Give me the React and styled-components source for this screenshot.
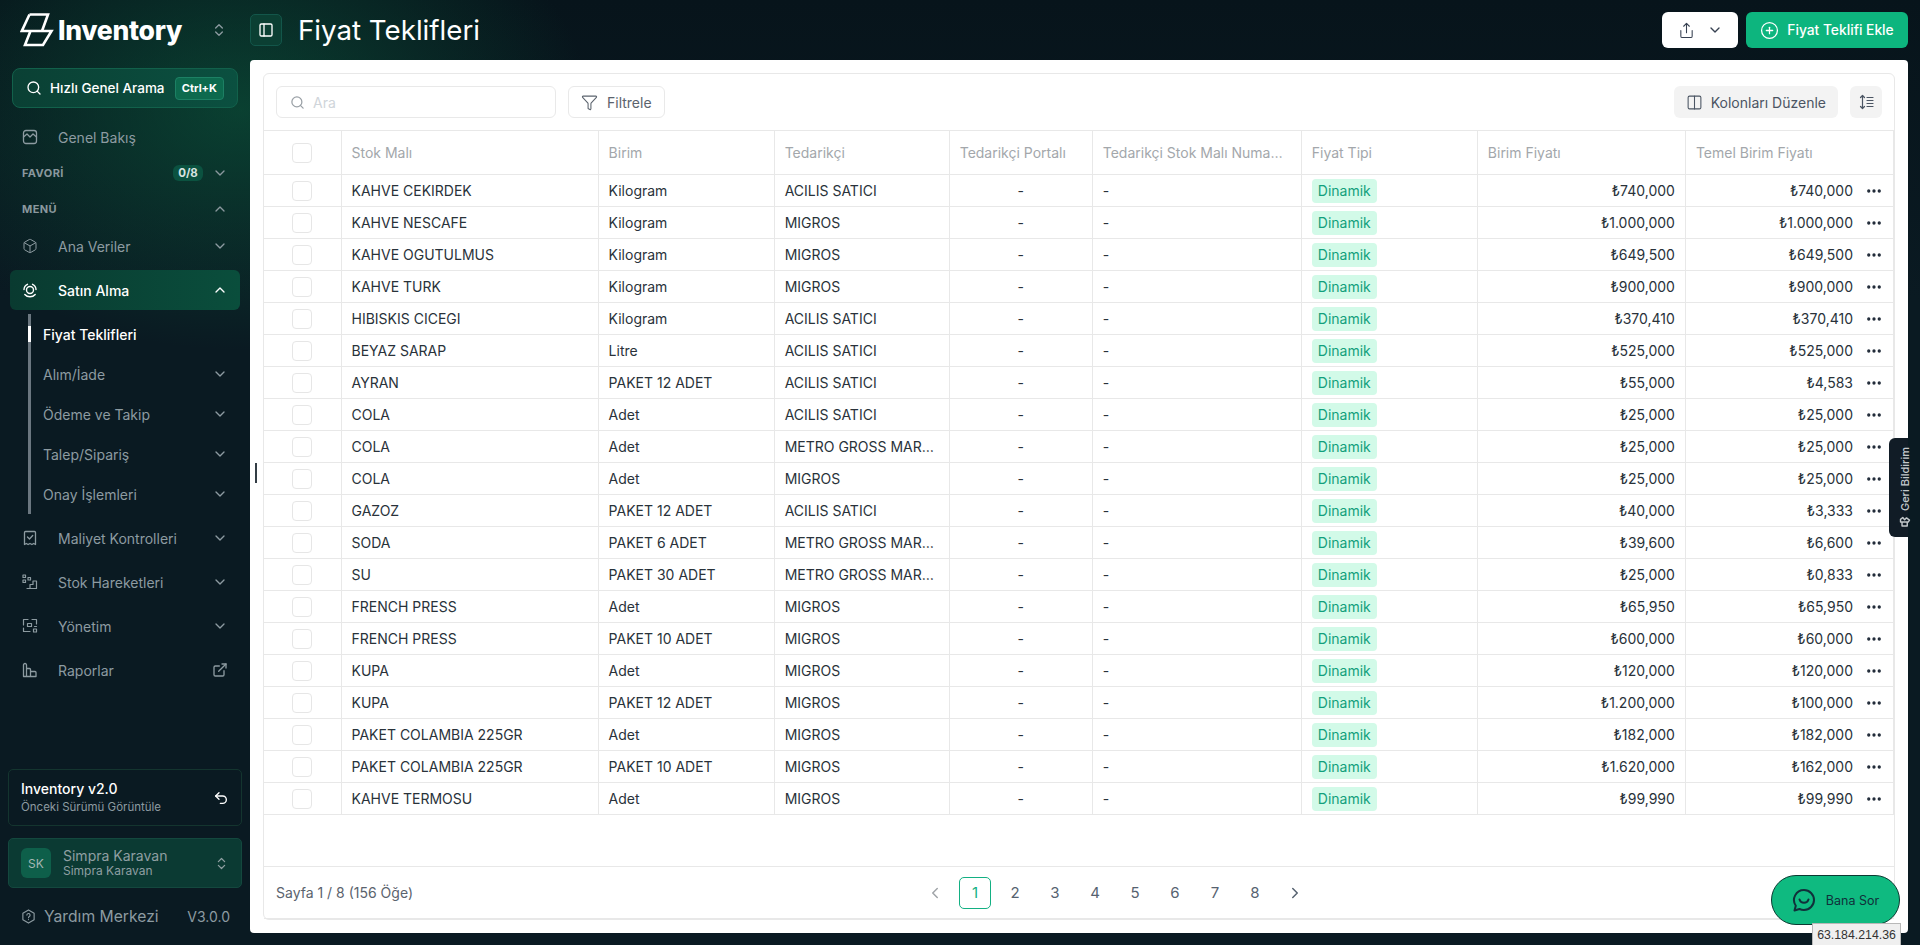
import styled, { createGlobalStyle } from 'styled-components';
import {
  Search, ChevronDown, ChevronUp, ChevronsUpDown, Box, ExternalLink, Undo2, Filter, Columns2,
  PanelLeft, Share, CirclePlus, Ellipsis, ChevronLeft, ChevronRight,
} from 'lucide-react';

const GlobalStyle = createGlobalStyle`
  html, body { margin: 0; padding: 0; height: 100%; }
  body { font-family: Inter, "Noto Sans", sans-serif; background: #0a1a22; overflow: hidden; }
  * { box-sizing: border-box; }
`;

const Shell = styled.div`
  position: relative;
  display: flex;
  height: 945px;
  width: 1920px;
  overflow: hidden;
  background:
    radial-gradient(ellipse 350px 240px at 240px 110px, rgba(11, 92, 62, 0.6), rgba(11, 92, 62, 0) 100%),
    linear-gradient(180deg, #07141b 0, #0a1a22 300px);
`;

const Sidebar = styled.aside`
  width: 250px;
  flex: none;
  display: flex;
  flex-direction: column;
  color: #8d9ba1;
`;

const LogoRow = styled.div`
  height: 68px;
  flex: none;
  display: flex;
  align-items: center;
  padding: 0 23px 8px 20px;
  justify-content: space-between;
`;

const LogoMark = styled.div`
  display: flex;
  align-items: center;
  gap: 4px;
  color: #fff;
  font-size: 26.5px;
  font-weight: 800;
  letter-spacing: -0.3px;
`;

const QuickSearch = styled.div`
  margin: 0 12px;
  height: 40px;
  flex: none;
  display: flex;
  align-items: center;
  gap: 8px;
  padding: 0 13px;
  border-radius: 8px;
  color: #fff;
  font-size: 13.5px;
  font-weight: 500;
  white-space: nowrap;
  background: linear-gradient(90deg, #0a4034, #0b5040);
  border: 1px solid #12614b;
`;

const Kbd = styled.span`
  margin-left: auto;
  height: 23px;
  padding: 0 6px;
  display: flex;
  align-items: center;
  border-radius: 4px;
  font-size: 11px;
  font-weight: 700;
  background: #0d6a4e;
  border: 1px solid #1d8064;
`;

const NavRow = styled.div`
  height: ${(p) => p.$h || 44}px;
  flex: none;
  margin: ${(p) => p.$mt || 0}px ${(p) => (p.$active ? 10 : 0)}px 0;
  padding: 0 ${(p) => (p.$active ? 12 : 22)}px;
  display: flex;
  align-items: center;
  font-size: 14px;
  border-radius: 6px;
  color: ${(p) => (p.$active ? '#fff' : '#8d9ba1')};
  font-weight: ${(p) => (p.$active ? 500 : 400)};
  background: ${(p) => (p.$active ? 'linear-gradient(90deg, #093a30, #0a4e3c)' : 'none')};
`;

const NavIcon = styled.span`
  width: 36px;
  flex: none;
  display: flex;
  align-items: center;
`;

const NavEnd = styled.span`
  margin-left: auto;
  display: flex;
  align-items: center;
`;

const SectionRow = styled.div`
  height: 36px;
  flex: none;
  padding: 0 22px;
  display: flex;
  align-items: center;
  font-size: 11px;
  font-weight: 700;
  letter-spacing: 0.4px;
  color: #8a989e;
`;

const Count = styled.span`
  margin-left: auto;
  margin-right: 9px;
  width: 30px;
  height: 16px;
  display: flex;
  align-items: center;
  justify-content: center;
  border-radius: 6px;
  font-size: 11.5px;
  font-weight: 700;
  letter-spacing: 0;
  color: #d7e4e0;
  background: #0b5240;
`;

const SubNav = styled.div`
  position: relative;
  flex: none;
  margin: 4px 0 2px 28px;
  border-left: 3px solid #6b7780;
`;

const SubRow = styled.div`
  position: relative;
  height: 40px;
  padding: 0 22px 0 12px;
  display: flex;
  align-items: center;
  justify-content: space-between;
  font-size: 14px;
  color: ${(p) => (p.$current ? '#fff' : '#8d9ba1')};
  font-weight: ${(p) => (p.$current ? 500 : 400)};
  &::before {
    content: ${(p) => (p.$current ? "''" : 'none')};
    position: absolute;
    left: -3px;
    top: 12px;
    width: 3px;
    height: 16px;
    background: #fff;
  }
`;

const SideFooter = styled.div`
  margin-top: auto;
  padding: 0 8px;
`;

const VersionCard = styled.div`
  height: 57px;
  display: flex;
  align-items: center;
  justify-content: space-between;
  padding: 0 12px;
  border: 1px solid #14352f;
  border-radius: 5px;
  color: #fff;
`;

const CardTitle = styled.div`
  font-size: 14px;
  font-weight: 500;
  line-height: 18px;
`;

const CardSub = styled.div`
  font-size: 11.5px;
  line-height: 18px;
  color: #8d9ba1;
`;

const UserCard = styled.div`
  height: 50px;
  margin-top: 12px;
  display: flex;
  align-items: center;
  gap: 12px;
  padding: 0 12px;
  background: #0b3a33;
  border: 1px solid #14483e;
  border-radius: 5px;
  color: #8f9fa2;
`;

const Avatar = styled.div`
  width: 30px;
  height: 30px;
  border-radius: 6px;
  display: flex;
  align-items: center;
  justify-content: center;
  font-size: 12px;
  background: #0e5f4a;
  color: #a5b7b5;
`;

const UserName = styled.div`
  font-size: 14px;
  line-height: 16px;
`;

const UserSub = styled.div`
  font-size: 12px;
  line-height: 14px;
`;

const HelpRow = styled.div`
  height: 57px;
  padding: 0 12px 0 13px;
  display: flex;
  align-items: center;
  gap: 8px;
  font-size: 15.7px;
  color: #8d9ba1;
`;

const Version = styled.span`
  margin-left: auto;
  font-size: 14px;
`;

const Main = styled.main`
  flex: 1;
  min-width: 0;
  display: flex;
  flex-direction: column;
  padding: 0 12px 12px 0;
`;

const TopBar = styled.header`
  height: 60px;
  flex: none;
  display: flex;
  align-items: center;
  gap: 16px;
`;

const PanelToggle = styled.div`
  width: 32px;
  height: 32px;
  display: flex;
  align-items: center;
  justify-content: center;
  color: #fff;
  border-radius: 5px;
  background: #0b3f33;
  border: 1px solid #13564a;
`;

const Title = styled.h1`
  margin: 0;
  color: #fff;
  font-size: 27.7px;
  font-weight: 400;
`;

const TopActions = styled.div`
  margin-left: auto;
  display: flex;
  gap: 8px;
`;

const ExportBtn = styled.div`
  width: 76px;
  height: 36px;
  display: flex;
  align-items: center;
  justify-content: center;
  gap: 12px;
  background: #fff;
  color: #374151;
  border-radius: 6px;
`;

const AddBtn = styled.div`
  width: 162px;
  height: 36px;
  display: flex;
  align-items: center;
  justify-content: center;
  gap: 8px;
  background: #0db57e;
  color: #fff;
  font-size: 13.8px;
  font-weight: 500;
  border-radius: 6px;
`;

const Panel = styled.section`
  flex: 1;
  min-height: 0;
  padding: 13px;
  background: #fff;
  border-radius: 4px;
`;

const Card = styled.div`
  height: 100%;
  display: flex;
  flex-direction: column;
  border: 1px solid #e8e8e8;
  border-radius: 6px;
`;

const Toolbar = styled.div`
  height: 56px;
  flex: none;
  display: flex;
  align-items: center;
  gap: 12px;
  padding: 0 12px;
`;

const SearchBox = styled.div`
  width: 280px;
  height: 32px;
  display: flex;
  align-items: center;
  gap: 8px;
  padding: 0 13px;
  border: 1px solid #e9e9e9;
  border-radius: 6px;
  color: #9aa0a6;
  font-size: 14px;
`;

const Placeholder = styled.span`
  color: #d0d5da;
`;

const OutlineBtn = styled.div`
  height: 32px;
  display: flex;
  align-items: center;
  gap: 9px;
  padding: 0 12px;
  border: 1px solid #e9e9e9;
  border-radius: 6px;
  font-size: 14px;
  color: #5b636d;
`;

const GreyBtn = styled.div`
  height: 32px;
  display: flex;
  align-items: center;
  justify-content: center;
  gap: 8px;
  padding: 0 ${(p) => (p.$square ? 0 : 12)}px;
  width: ${(p) => (p.$square ? '32px' : 'auto')};
  margin-left: ${(p) => (p.$push ? 'auto' : 0)};
  background: #f3f3f3;
  border-radius: 6px;
  font-size: 14px;
  color: #4b5563;
`;

const TableWrap = styled.div`
  flex: 1;
  min-height: 0;
`;

const Table = styled.table`
  width: 100%;
  table-layout: fixed;
  border-collapse: collapse;
  font-size: 14px;
  color: #29323a;
`;

const Th = styled.th`
  height: 44px;
  padding: 0 ${(p) => (p.$first ? 10 : 16)}px 0 10px;
  text-align: left;
  font-weight: 400;
  color: #a3a7ab;
  border: 1px solid #e8e8e8;
  border-left: ${(p) => (p.$first ? 'none' : '1px solid #e8e8e8')};
  white-space: nowrap;
  overflow: hidden;
  text-overflow: ellipsis;
`;

const Td = styled.td`
  height: 32px;
  padding: 0 10px;
  border: 1px solid #e8e8e8;
  border-left: ${(p) => (p.$first ? 'none' : '1px solid #e8e8e8')};
  text-align: ${(p) => p.$align || 'left'};
  white-space: nowrap;
  overflow: hidden;
  text-overflow: ellipsis;
`;

const Check = styled.span`
  display: block;
  width: 20px;
  height: 20px;
  margin: 0 auto;
  border: 1px solid #e6e6e6;
  border-radius: 4px;
`;

const Badge = styled.span`
  display: inline-block;
  padding: 0 6px;
  line-height: 24px;
  border-radius: 4px;
  color: #12a07c;
  background: #d2fae8;
`;

const PriceCell = styled.div`
  display: flex;
  align-items: center;
  justify-content: flex-end;
  gap: 12px;
  color: #29323a;
`;

const Pager = styled.footer`
  height: 53px;
  flex: none;
  display: flex;
  align-items: center;
  gap: 8px;
  padding: 0 12px;
  border-top: 1px solid #e8e8e8;
  border-bottom: 1px solid #e8e8e8;
  color: #4f5a66;
  font-size: 14px;
`;

const PagerInfo = styled.span`
  width: 635px;
  flex: none;
  color: #5b636d;
`;

const PageBtn = styled.span`
  width: 32px;
  height: 32px;
  display: flex;
  align-items: center;
  justify-content: center;
  font-size: 15px;
  border-radius: 5px;
  color: ${(p) => (p.$on ? '#13b083' : p.$off ? '#a0a4a8' : '#566270')};
  border: 1px solid ${(p) => (p.$on ? '#13b083' : 'transparent')};
`;

const Handle = styled.span`
  position: absolute;
  left: 255px;
  top: 463px;
  width: 2px;
  height: 20px;
  background: #333d45;
`;

const FeedbackTab = styled.div`
  position: absolute;
  left: 1889px;
  top: 438px;
  width: 31px;
  height: 99px;
  display: flex;
  flex-direction: column-reverse;
  align-items: center;
  gap: 5px;
  padding: 9px 0;
  background: linear-gradient(90deg, #111c26 19px, #0a1a22 19px);
  border-radius: 6px 0 0 6px;
  color: #c4c9cc;
`;

const FeedbackText = styled.span`
  writing-mode: vertical-rl;
  transform: rotate(180deg);
  font-size: 11px;
  font-weight: 500;
  white-space: nowrap;
`;

const AskBtn = styled.div`
  position: absolute;
  left: 1771px;
  top: 875px;
  width: 129px;
  height: 50px;
  display: flex;
  align-items: center;
  justify-content: center;
  gap: 10px;
  font-size: 12.5px;
  color: #11303a;
  background: #0fba80;
  border: 1px solid #0c3a32;
  border-radius: 25px;
`;

const IpTag = styled.div`
  position: absolute;
  left: 1812px;
  top: 923px;
  width: 89px;
  height: 22px;
  display: flex;
  align-items: center;
  justify-content: center;
  font-family: "Liberation Sans", Arial, sans-serif;
  font-size: 12.3px;
  color: #333;
  background: #efefef;
  border: 1px solid #b8b8b8;
  border-bottom: none;
`;

const ic = { fill: 'none', stroke: 'currentColor', strokeWidth: 1.5, strokeLinecap: 'round', strokeLinejoin: 'round' };

const LogoSvg = () => (
  <svg width="34" height="34" viewBox="0 0 34 34" {...ic} strokeWidth="2.6" strokeLinecap="butt" strokeLinejoin="miter">
    <path d="M9.5 1.500H28L22 18" />
    <path d="M9.500 1.500 1.800 18H31.500L23 32H5L10.500 18" />
  </svg>
);

const OverviewIcon = () => (
  <svg width="16" height="16" viewBox="0 0 16 16" {...ic} strokeWidth="1.3">
    <rect x="1.500" y="1.500" width="13" height="13" rx="2.500" />
    <path d="M1.500 8 5 5l3 3 3-3 3.500 3" />
  </svg>
);

const BuyIcon = () => (
  <svg width="16" height="16" viewBox="0 0 16 16" {...ic} strokeWidth="1.4">
    <circle cx="8" cy="8" r="3.500" />
    <path d="M2 7.500A6 6 0 0 1 5.500 2.300M10.500 2.300A6 6 0 0 1 14 7.500M2.800 12.500a7 7 0 0 0 10.400 0" />
  </svg>
);

const ReceiptIcon = () => (
  <svg width="16" height="16" viewBox="0 0 16 16" {...ic} strokeWidth="1.3">
    <path d="M2.500 2.500a1 1 0 0 1 1-1h9a1 1 0 0 1 1 1v12l-1.800-1-1.800 1-1.900-1-1.900 1-1.800-1-1.800 1z" />
    <path d="m5.500 7 2 2 3.200-3.500" />
  </svg>
);

const StockIcon = () => (
  <svg width="16" height="16" viewBox="0 0 16 16" {...ic} strokeWidth="1.2">
    <rect x="1" y="1" width="2.500" height="2.500" />
    <rect x="1" y="6" width="2.500" height="2.500" />
    <rect x="6" y="3.500" width="2.500" height="2.500" />
    <path d="M5 14.500h9.500V7H11v3.500H8v4" />
  </svg>
);

const AdminIcon = () => (
  <svg width="16" height="16" viewBox="0 0 16 16" {...ic} strokeWidth="1.2">
    <path d="M6 1.500H1.500V7M1.500 10v3.500H8M10 1.500h4.500V6" />
    <rect x="5.500" y="5.500" width="4" height="3" />
    <rect x="11.500" y="11" width="3" height="3" />
    <path d="M12.500 8.500h2" />
  </svg>
);

const ReportIcon = () => (
  <svg width="16" height="16" viewBox="0 0 16 16" {...ic} strokeWidth="1.3">
    <path d="M1.500 14.500V3a1.500 1.500 0 0 1 3 0v11.500zM4.500 14.500V6.500h3a1 1 0 0 1 1 1v7zM8.500 14.500V9.500h4.500a1 1 0 0 1 1 1v4z" />
  </svg>
);

const HelpIcon = () => (
  <svg width="15" height="15" viewBox="0 0 16 16" {...ic} strokeWidth="1.2">
    <path d="M8 1 14 4.500v7L8 15l-6-3.500v-7z" />
    <path d="M6.300 6.500a1.700 1.700 0 1 1 2.500 1.500c-.5.3-.8.6-.8 1.200M8 11.200v.1" />
  </svg>
);

const FeedbackIcon = () => (
  <svg width="16" height="16" viewBox="0 0 16 16" {...ic} strokeWidth="1.9">
    <path d="M4 8v5.500h7V8M2 8h10.500l1.500-2.500-4-3-2.500 2.500L5 2 2 4.500z" />
  </svg>
);

const ChatIcon = () => (
  <svg width="24" height="24" viewBox="0 0 24 24" {...ic} strokeWidth="2">
    <path d="M12 2a10 10 0 0 1 0 20c-1.800 0-3.300-.4-4.500-1L2.500 22.500l1.300-4.800A10 10 0 0 1 12 2z" />
    <path d="M7.500 11.500a4.700 4.700 0 0 0 9 0" />
  </svg>
);

const RowHeightIcon = () => (
  <svg width="16" height="16" viewBox="0 0 16 16" {...ic} strokeWidth="1.2">
    <path d="M4.500 1.500v13M2.500 3.500l2-2 2 2M2.500 12.500l2 2 2-2M9 3.500h6M9 6.500h6M9 9.500h6M9 12.500h6" />
  </svg>
);

const rows = [
  ['KAHVE CEKIRDEK', 'Kilogram', 'ACILIS SATICI', '₺740,000', '₺740,000'],
  ['KAHVE NESCAFE', 'Kilogram', 'MIGROS', '₺1.000,000', '₺1.000,000'],
  ['KAHVE OGUTULMUS', 'Kilogram', 'MIGROS', '₺649,500', '₺649,500'],
  ['KAHVE TURK', 'Kilogram', 'MIGROS', '₺900,000', '₺900,000'],
  ['HIBISKIS CICEGI', 'Kilogram', 'ACILIS SATICI', '₺370,410', '₺370,410'],
  ['BEYAZ SARAP', 'Litre', 'ACILIS SATICI', '₺525,000', '₺525,000'],
  ['AYRAN', 'PAKET 12 ADET', 'ACILIS SATICI', '₺55,000', '₺4,583'],
  ['COLA', 'Adet', 'ACILIS SATICI', '₺25,000', '₺25,000'],
  ['COLA', 'Adet', 'METRO GROSS MARKET', '₺25,000', '₺25,000'],
  ['COLA', 'Adet', 'MIGROS', '₺25,000', '₺25,000'],
  ['GAZOZ', 'PAKET 12 ADET', 'ACILIS SATICI', '₺40,000', '₺3,333'],
  ['SODA', 'PAKET 6 ADET', 'METRO GROSS MARKET', '₺39,600', '₺6,600'],
  ['SU', 'PAKET 30 ADET', 'METRO GROSS MARKET', '₺25,000', '₺0,833'],
  ['FRENCH PRESS', 'Adet', 'MIGROS', '₺65,950', '₺65,950'],
  ['FRENCH PRESS', 'PAKET 10 ADET', 'MIGROS', '₺600,000', '₺60,000'],
  ['KUPA', 'Adet', 'MIGROS', '₺120,000', '₺120,000'],
  ['KUPA', 'PAKET 12 ADET', 'MIGROS', '₺1.200,000', '₺100,000'],
  ['PAKET COLAMBIA 225GR', 'Adet', 'MIGROS', '₺182,000', '₺182,000'],
  ['PAKET COLAMBIA 225GR', 'PAKET 10 ADET', 'MIGROS', '₺1.620,000', '₺162,000'],
  ['KAHVE TERMOSU', 'Adet', 'MIGROS', '₺99,990', '₺99,990'],
];

const columnWidths = [77, 257, 176, 175, 143, 209, 176, 208, 208];

const Chev = ({ up }) => (up ? <ChevronUp size={16} /> : <ChevronDown size={16} />);

export default function App() {
  return (
    <Shell>
      <GlobalStyle />
      <Sidebar>
        <LogoRow>
          <LogoMark>
            <LogoSvg />
            Inventory
          </LogoMark>
          <ChevronsUpDown size={16} />
        </LogoRow>
        <QuickSearch>
          <Search size={16} />
          Hızlı Genel Arama
          <Kbd>Ctrl+K</Kbd>
        </QuickSearch>
        <NavRow $h={36} $mt={11}>
          <NavIcon><OverviewIcon /></NavIcon>
          Genel Bakış
        </NavRow>
        <SectionRow>
          FAVORİ
          <Count>0/8</Count>
          <Chev />
        </SectionRow>
        <SectionRow>
          MENÜ
          <NavEnd><Chev up /></NavEnd>
        </SectionRow>
        <NavRow $h={38}>
          <NavIcon><Box size={16} strokeWidth={1.5} /></NavIcon>
          Ana Veriler
          <NavEnd><Chev /></NavEnd>
        </NavRow>
        <NavRow $active $h={40} $mt={5}>
          <NavIcon><BuyIcon /></NavIcon>
          Satın Alma
          <NavEnd><Chev up /></NavEnd>
        </NavRow>
        <SubNav>
          <SubRow $current>Fiyat Teklifleri</SubRow>
          <SubRow>Alım/İade <Chev /></SubRow>
          <SubRow>Ödeme ve Takip <Chev /></SubRow>
          <SubRow>Talep/Sipariş <Chev /></SubRow>
          <SubRow>Onay İşlemleri <Chev /></SubRow>
        </SubNav>
        <NavRow>
          <NavIcon><ReceiptIcon /></NavIcon>
          Maliyet Kontrolleri
          <NavEnd><Chev /></NavEnd>
        </NavRow>
        <NavRow>
          <NavIcon><StockIcon /></NavIcon>
          Stok Hareketleri
          <NavEnd><Chev /></NavEnd>
        </NavRow>
        <NavRow>
          <NavIcon><AdminIcon /></NavIcon>
          Yönetim
          <NavEnd><Chev /></NavEnd>
        </NavRow>
        <NavRow>
          <NavIcon><ReportIcon /></NavIcon>
          Raporlar
          <NavEnd><ExternalLink size={16} /></NavEnd>
        </NavRow>
        <SideFooter>
          <VersionCard>
            <div>
              <CardTitle>Inventory v2.0</CardTitle>
              <CardSub>Önceki Sürümü Görüntüle</CardSub>
            </div>
            <Undo2 size={16} />
          </VersionCard>
          <UserCard>
            <Avatar>SK</Avatar>
            <div>
              <UserName>Simpra Karavan</UserName>
              <UserSub>Simpra Karavan</UserSub>
            </div>
            <NavEnd><ChevronsUpDown size={15} /></NavEnd>
          </UserCard>
          <HelpRow>
            <HelpIcon />
            Yardım Merkezi
            <Version>V3.0.0</Version>
          </HelpRow>
        </SideFooter>
      </Sidebar>
      <Main>
        <TopBar>
          <PanelToggle><PanelLeft size={16} /></PanelToggle>
          <Title>Fiyat Teklifleri</Title>
          <TopActions>
            <ExportBtn>
              <Share size={17} strokeWidth={1.5} />
              <ChevronDown size={16} />
            </ExportBtn>
            <AddBtn>
              <CirclePlus size={19} strokeWidth={1.6} />
              Fiyat Teklifi Ekle
            </AddBtn>
          </TopActions>
        </TopBar>
        <Panel>
          <Card>
            <Toolbar>
              <SearchBox>
                <Search size={15} />
                <Placeholder>Ara</Placeholder>
              </SearchBox>
              <OutlineBtn>
                <Filter size={17} strokeWidth={1.5} />
                Filtrele
              </OutlineBtn>
              <GreyBtn $push>
                <Columns2 size={17} strokeWidth={1.5} />
                Kolonları Düzenle
              </GreyBtn>
              <GreyBtn $square>
                <RowHeightIcon />
              </GreyBtn>
            </Toolbar>
            <TableWrap>
              <Table>
                <colgroup>
                  {columnWidths.map((w, i) => <col key={i} width={w} />)}
                </colgroup>
                <thead>
                  <tr>
                    <Th $first><Check /></Th>
                    <Th>Stok Malı</Th>
                    <Th>Birim</Th>
                    <Th>Tedarikçi</Th>
                    <Th>Tedarikçi Portalı</Th>
                    <Th>Tedarikçi Stok Malı Numarası</Th>
                    <Th>Fiyat Tipi</Th>
                    <Th>Birim Fiyatı</Th>
                    <Th>Temel Birim Fiyatı</Th>
                  </tr>
                </thead>
                <tbody>
                  {rows.map((r, i) => (
                    <tr key={i}>
                      <Td $first><Check /></Td>
                      <Td>{r[0]}</Td>
                      <Td>{r[1]}</Td>
                      <Td>{r[2]}</Td>
                      <Td $align="center">-</Td>
                      <Td>-</Td>
                      <Td><Badge>Dinamik</Badge></Td>
                      <Td $align="right">{r[3]}</Td>
                      <Td>
                        <PriceCell>
                          {r[4]}
                          <Ellipsis size={18} strokeWidth={2.4} color="#1f2937" />
                        </PriceCell>
                      </Td>
                    </tr>
                  ))}
                </tbody>
              </Table>
            </TableWrap>
            <Pager>
              <PagerInfo>Sayfa 1 / 8 (156 Öğe)</PagerInfo>
              <PageBtn $off><ChevronLeft size={18} /></PageBtn>
              {[1, 2, 3, 4, 5, 6, 7, 8].map((n) => (
                <PageBtn key={n} $on={n === 1}>{n}</PageBtn>
              ))}
              <PageBtn><ChevronRight size={18} /></PageBtn>
            </Pager>
          </Card>
        </Panel>
      </Main>
      <Handle />
      <FeedbackTab>
        <FeedbackIcon />
        <FeedbackText>Geri Bildirim</FeedbackText>
      </FeedbackTab>
      <AskBtn>
        <ChatIcon />
        Bana Sor
      </AskBtn>
      <IpTag>63.184.214.36</IpTag>
    </Shell>
  );
}
